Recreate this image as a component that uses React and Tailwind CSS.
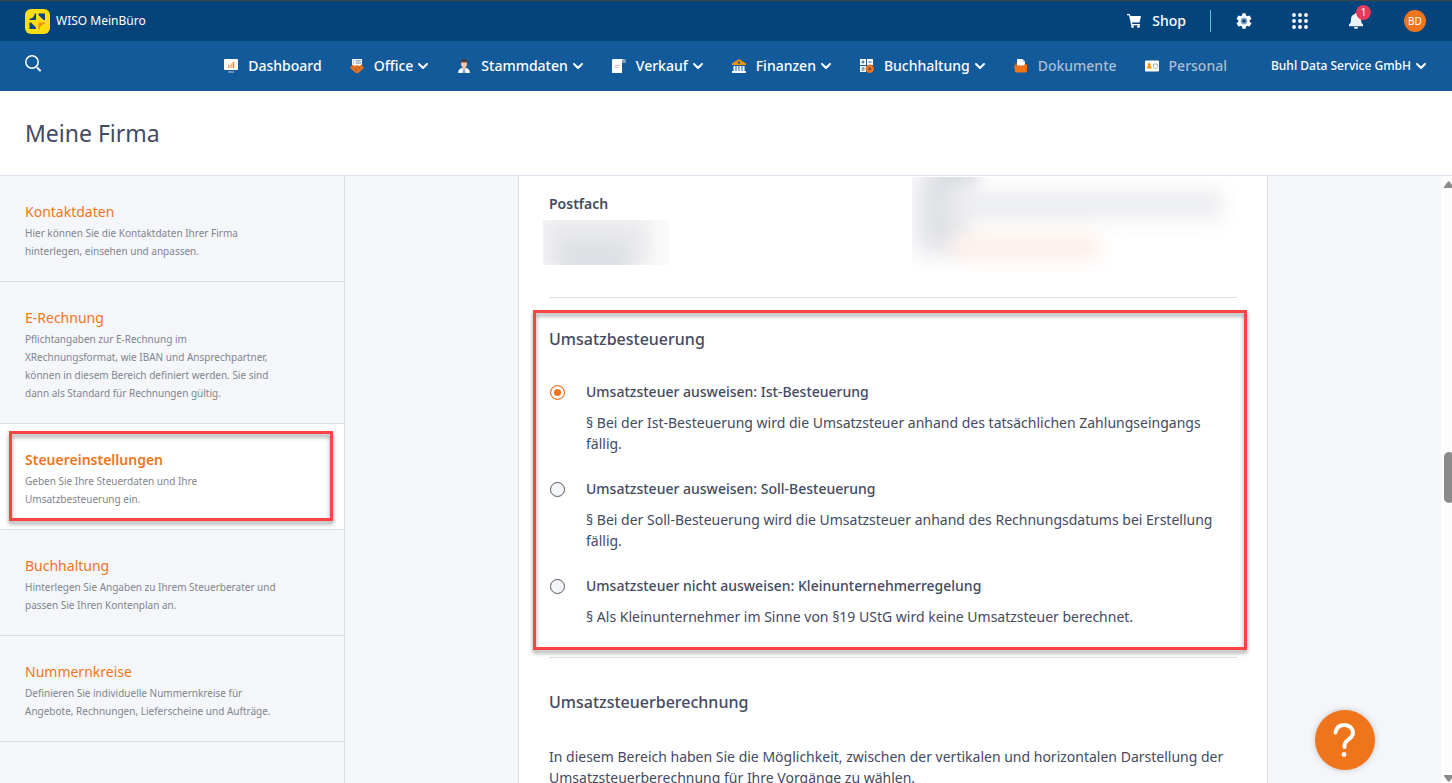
import React, { useState } from "react";

function Chevron() {
  return (
    <svg width="12" height="12" viewBox="0 0 12 12" fill="none" stroke="currentColor" strokeWidth="2" strokeLinecap="round" strokeLinejoin="round">
      <path d="M2 4l4 4 4-4" />
    </svg>
  );
}

function DashboardIcon() {
  return (
    <svg width="14" height="14" viewBox="0 0 14 14">
      <rect x="0" y="0" width="14" height="11" rx="1" fill="#fff" />
      <rect x="4" y="6" width="1.5" height="3" fill="#f59a4a" />
      <rect x="6.3" y="4.5" width="1.5" height="4.5" fill="#f8b27a" />
      <rect x="8.7" y="3" width="1.5" height="6" fill="#ef751c" />
      <rect x="4" y="12" width="6" height="2" rx="0.5" fill="#6d93b4" />
    </svg>
  );
}

function OfficeIcon() {
  return (
    <svg width="14" height="14" viewBox="0 0 14 14">
      <path d="M2 0h10v7H2z" fill="#fff" />
      <path d="M3.2 1.8h1M5.5 1.8H11M3.2 4h1M5.5 4H11" stroke="#5f86ad" strokeWidth="1" />
      <path d="M0 9L2.500 5.500 5 7l2-1 2 1 2.500-1.500L14 9l-2 1.500L8.500 14h-3L2 10.500z" fill="#e5711f" />
      <path d="M4 8.500l3 3M7.500 7.500l3 2.500M5 11l2 1.500" stroke="#8d5a3a" strokeWidth="0.8" fill="none" />
    </svg>
  );
}

function PersonIcon() {
  return (
    <svg width="14" height="14" viewBox="0 0 14 14">
      <path d="M1 14c0-3 2-4.500 4-5h4c2 .5 4 2 4 5z" fill="#fff" />
      <path d="M6 10h2l.5 4h-3z" fill="#7fa6d6" />
      <path d="M5.500 7.500h3V10L7 11l-1.500-1z" fill="#f0b79a" />
      <ellipse cx="7" cy="5" rx="3" ry="3.600" fill="#f7c6aa" />
      <path d="M3.500 5C3 1.500 5 0 7 0s4 1.500 3.500 5L9.800 3.300C8 3.600 6 3.500 4.600 2.900z" fill="#4b3b3b" />
    </svg>
  );
}

function InvoiceIcon() {
  return (
    <svg width="14" height="14" viewBox="0 0 14 14">
      <path d="M10 0h2.500C13.500 0 14 1 14 2v2h-4z" fill="#7d9fb8" />
      <path d="M1.500 0H11c-.7.500-1 1.200-1 2v12H0V1.500C0 .6.600 0 1.500 0z" fill="#fff" />
      <path d="M2.500 6.500H8M2.500 8.500H6" stroke="#f3b5b5" strokeWidth="1" />
    </svg>
  );
}

function BankIcon() {
  return (
    <svg width="14" height="14" viewBox="0 0 14 14">
      <path d="M7 0l7 4.500V6H0V4.500z" fill="#f39200" />
      <circle cx="7" cy="3.500" r="1.200" fill="#135a9b" />
      <path d="M1.500 7h2v5h-2zM4.500 7h2v5h-2zM7.500 7h2v5h-2zM10.500 7h2v5h-2zM0 12h14v2H0z" fill="#fff" />
    </svg>
  );
}

function LedgerIcon() {
  return (
    <svg width="14" height="14" viewBox="0 0 14 14">
      <path d="M0 0h6v6H0zM7 0h6v6H7zM0 7h6v6H0z" fill="#fff" />
      <path d="M1.500 3h3M3 1.500v3M8.500 3h3M1.500 9h3M1.500 11h3" stroke="#135a9b" strokeWidth="1" />
      <circle cx="9.700" cy="9.700" r="4.200" fill="#e97424" />
      <circle cx="9.700" cy="9.700" r="1.500" fill="#7b4f3e" />
    </svg>
  );
}

function FolderIcon() {
  return (
    <svg width="14" height="14" viewBox="0 0 14 14">
      <path d="M3 0h5.500L11 2.500V7H3z" fill="#fff" />
      <path d="M8.500 0v2.500H11z" fill="#b7cbe0" />
      <path d="M.5 4.500H3v2h7l1-1.200h2V13H1.500z" fill="#c95f14" />
      <path d="M0 7h9.500L11 6h2.200l-.8 6.500c0 .6-.4 1-1 1H2c-.5 0-.9-.4-1-1z" fill="#ef751c" />
    </svg>
  );
}

function IdCardIcon() {
  return (
    <svg width="14" height="14" viewBox="0 0 14 14">
      <rect x="0" y="1.500" width="14" height="11" rx="1" fill="#fff" />
      <circle cx="4.200" cy="5.600" r="1.500" fill="#f39200" />
      <path d="M1.700 9.500c0-2 1-2.500 2.500-2.500s2.500.5 2.500 2.500z" fill="#f39200" />
      <path d="M8.500 5h4v2.500c0 1-1 2-2 2s-2-1-2-2z" fill="none" stroke="#8fb0d3" strokeWidth="0.900" />
    </svg>
  );
}

function Logo() {
  return (
    <svg width="25" height="25" viewBox="0 0 25 25">
      <rect width="25" height="25" rx="6" fill="#ffdd0e" />
      <path d="M4.500 11V9.800C7.500 9.500 9.500 7.500 9.800 4.500H11V11z" fill="#0b4581" />
      <path d="M13.500 4.500H20V11h-1.500L13.500 6z" fill="#0b4581" />
      <path d="M4.500 13.500H6l5 5V20H4.500z" fill="#0b4581" />
      <path d="M13.500 13.500H20V15c-3 .3-5 2.200-5.200 5h-1.300z" fill="#f39200" />
    </svg>
  );
}

const navItems = [
  { label: "Dashboard", icon: <DashboardIcon /> },
  { label: "Office", icon: <OfficeIcon />, menu: true },
  { label: "Stammdaten", icon: <PersonIcon />, menu: true },
  { label: "Verkauf", icon: <InvoiceIcon />, menu: true },
  { label: "Finanzen", icon: <BankIcon />, menu: true },
  { label: "Buchhaltung", icon: <LedgerIcon />, menu: true },
  { label: "Dokumente", icon: <FolderIcon />, muted: true },
  { label: "Personal", icon: <IdCardIcon />, muted: true },
];

const sections = [
  { title: "Kontaktdaten", text: "Hier können Sie die Kontaktdaten Ihrer Firma hinterlegen, einsehen und anpassen." },
  {
    title: "E-Rechnung",
    text: "Pflichtangaben zur E-Rechnung im XRechnungsformat, wie IBAN und Ansprechpartner, können in diesem Bereich definiert werden. Sie sind dann als Standard für Rechnungen gültig.",
  },
  { title: "Steuereinstellungen", text: "Geben Sie Ihre Steuerdaten und Ihre Umsatzbesteuerung ein.", active: true },
  { title: "Buchhaltung", text: "Hinterlegen Sie Angaben zu Ihrem Steuerberater und passen Sie Ihren Kontenplan an." },
  { title: "Nummernkreise", text: "Definieren Sie individuelle Nummernkreise für Angebote, Rechnungen, Lieferscheine und Aufträge." },
];

const taxOptions = [
  {
    id: "ist",
    label: "Umsatzsteuer ausweisen: Ist-Besteuerung",
    text: "§ Bei der Ist-Besteuerung wird die Umsatzsteuer anhand des tatsächlichen Zahlungseingangs fällig.",
  },
  {
    id: "soll",
    label: "Umsatzsteuer ausweisen: Soll-Besteuerung",
    text: "§ Bei der Soll-Besteuerung wird die Umsatzsteuer anhand des Rechnungsdatums bei Erstellung fällig.",
  },
  {
    id: "klein",
    label: "Umsatzsteuer nicht ausweisen: Kleinunternehmerregelung",
    text: "§ Als Kleinunternehmer im Sinne von §19 UStG wird keine Umsatzsteuer berechnet.",
  },
];

function TopBar() {
  return (
    <header className="flex h-[41px] shrink-0 items-center justify-between border-t border-[#444444] bg-[#05447a] pr-[26px] pl-[25px] text-white">
      <a href="#" className="flex items-center gap-[6px] text-xs">
        <Logo />
        WISO MeinBüro
      </a>
      <div className="flex items-center">
        <a href="#" className="flex items-center gap-[10px] text-sm font-medium">
          <svg width="15" height="14" viewBox="0 0 15 14" fill="#fff">
            <path d="M0 0h2.800l.6 2H14l-1.500 6.500H5L5.300 10H13v1.200H4.200L2 1.300H0z" />
            <circle cx="5.500" cy="12.500" r="1.400" />
            <circle cx="11.500" cy="12.500" r="1.400" />
          </svg>
          Shop
        </a>
        <span className="ml-6 h-[22px] w-px bg-[#5fc3d0]" />
        <button aria-label="Einstellungen" className="ml-6">
          <svg width="18" height="18" viewBox="0 0 24 24">
            <path fill="#fff" d="M19.500 12.900a7.500 7.500 0 0 0 0-1.800l2.200-1.700a.6.600 0 0 0 .1-.7l-2.200-3.700a.6.600 0 0 0-.7-.2l-2.600 1a8 8 0 0 0-1.700-1l-.4-2.700a.6.600 0 0 0-.6-.5H10.400a.6.600 0 0 0-.6.500l-.4 2.700a8 8 0 0 0-1.700 1l-2.600-1a.6.600 0 0 0-.7.200L2.200 8.700a.6.600 0 0 0 .1.700l2.200 1.700a7.500 7.500 0 0 0 0 1.800l-2.200 1.700a.6.600 0 0 0-.1.700l2.200 3.700c.1.200.4.300.7.200l2.600-1a8 8 0 0 0 1.700 1l.4 2.700c0 .3.300.5.600.5h3.200c.3 0 .6-.2.600-.5l.4-2.700a8 8 0 0 0 1.700-1l2.600 1c.3.100.6 0 .7-.2l2.200-3.700a.6.600 0 0 0-.1-.7z" />
            <circle cx="12" cy="12" r="4.500" fill="#7fa3c4" />
            <circle cx="12" cy="12" r="2.300" fill="#05447a" />
          </svg>
        </button>
        <button aria-label="Apps" className="ml-[39px]">
          <svg width="16" height="16" viewBox="0 0 16 16" fill="#fff">
            {[2, 8, 14].map((y) => [2, 8, 14].map((x) => <circle key={`${x}-${y}`} cx={x} cy={y} r="1.900" />))}
          </svg>
        </button>
        <button aria-label="Benachrichtigungen" className="relative ml-10">
          <svg width="16" height="16" viewBox="0 0 16 16" fill="#eef1f6">
            <path d="M8 0c.7 0 1.100.5 1.100 1.100C11.500 1.600 13 3.500 13 6c0 3.500 1 4.500 2 5.500v1.700H1v-1.700C2 10.500 3 9.500 3 6c0-2.500 1.500-4.400 3.900-4.900C6.900.5 7.300 0 8 0zM6 14h4c0 1.200-.9 2-2 2s-2-.8-2-2z" />
          </svg>
          <span className="absolute -top-2 left-2 flex h-[15px] w-[15px] items-center justify-center rounded-full bg-[#e83a5f] text-[10px]">1</span>
        </button>
        <button className="ml-10 flex h-[22px] w-[22px] items-center justify-center rounded-full bg-[#ef751c] text-[10px]">BD</button>
      </div>
    </header>
  );
}

function NavBar() {
  return (
    <nav className="flex h-[50px] shrink-0 items-center justify-between bg-[#135a9b] px-[25px] text-white">
      <button aria-label="Suche" className="pb-[5px]">
        <svg width="16" height="17" viewBox="0 0 16 17" fill="none" stroke="#fff" strokeWidth="1.500" strokeLinecap="round">
          <circle cx="7" cy="7" r="6.200" />
          <path d="M12.500 13l2.500 2.500" strokeWidth="2" />
        </svg>
      </button>
      <div className="flex items-center">
        <ul className="flex items-center gap-7 text-sm font-medium">
          {navItems.map((item) => (
            <li key={item.label}>
              <a href="#" className={item.muted ? "flex items-center text-[#a9bdd2]" : "flex items-center"}>
                {item.icon}
                <span className="ml-[10px]">{item.label}</span>
                {item.menu && <span className="ml-1"><Chevron /></span>}
              </a>
            </li>
          ))}
        </ul>
        <button className="ml-11 flex items-center gap-1 text-xs font-medium">
          Buhl Data Service GmbH
          <Chevron />
        </button>
      </div>
    </nav>
  );
}

// Red marker frame around whatever it is placed in
function Marker({ className }) {
  return <div className={`pointer-events-none absolute border-[3px] border-[#ff4444] drop-shadow-[0_3px_2px_rgba(0,0,0,0.4)] ${className}`} />;
}

function Sidebar() {
  return (
    <aside className="w-[345px] shrink-0 border-r border-[#dcdfea]">
      {sections.map((s) => (
        <a
          key={s.title}
          href="#"
          className={`relative block border-b border-[#dcdfea] pt-6 pr-16 pb-[21px] pl-[25px] ${s.active ? "bg-white" : ""}`}
        >
          <h2 className={`text-sm leading-6 text-[#ef751c] ${s.active ? "font-semibold" : ""}`}>{s.title}</h2>
          <p className="text-[10px] leading-[18px] text-[#80858f]">{s.text}</p>
          {s.active && <Marker className="top-[7px] right-[11px] bottom-2 left-[9px]" />}
        </a>
      ))}
    </aside>
  );
}

function TaxForm() {
  const [selected, setSelected] = useState("ist");

  return (
    <section className="relative mt-3 -mr-[10px] -ml-4 pt-[17px] pr-[22px] pb-[23px] pl-4">
      <h2 className="text-base leading-6 font-medium">Umsatzbesteuerung</h2>
      <div className="mt-[30px] space-y-6">
        {taxOptions.map((o) => (
          <div key={o.id} className="flex gap-[21px]">
            <input
              type="radio"
              id={o.id}
              name="tax"
              checked={selected === o.id}
              onChange={() => setSelected(o.id)}
              className="mt-1 ml-px h-[15px] w-[15px] shrink-0 appearance-none rounded-full border border-[#55575f] bg-[#f5f6fa] checked:border-[#ef751c] checked:bg-[#ef751c] checked:shadow-[inset_0_0_0_3px_white]"
            />
            <div>
              <label htmlFor={o.id} className="block leading-[21px] font-medium">{o.label}</label>
              <p className="mt-[10px] leading-[21px]">{o.text}</p>
            </div>
          </div>
        ))}
      </div>
      <Marker className="inset-0" />
    </section>
  );
}

function App() {
  return (
    <div className="flex h-screen flex-col overflow-hidden bg-white font-['Noto_Sans',sans-serif] text-[#434a61]">
      <TopBar />
      <NavBar />
      <div className="flex h-[85px] shrink-0 items-center border-b border-[#dcdfea] px-[25px]">
        <h1 className="text-[23px] leading-8">Meine Firma</h1>
      </div>
      <div className="flex min-h-0 flex-1 bg-[#f5f6fa]">
        <Sidebar />
        <main className="min-w-0 flex-1 overflow-hidden">
          <div className="mx-auto max-w-[750px] border-x border-[#dcdfea] bg-white px-[30px] pb-10 text-sm">
            <div className="grid grid-cols-[1fr_325px] pt-px">
              <div className="pt-4">
                <h3 className="leading-[21px] font-semibold">Postfach</h3>
                <div className="relative mt-[6px] -ml-[6px] h-[45px] w-[127px] overflow-hidden bg-[#fbfbfb]">
                  <div className="absolute -top-2 -left-1 h-14 w-[112px] bg-[#ebecee] blur-[10px]" />
                  <div className="absolute top-5 left-4 h-10 w-[72px] bg-[#dddfe4] blur-[10px]" />
                </div>
              </div>
              <div className="relative h-24 overflow-hidden">
                <div className="absolute -top-2 left-1 h-[84px] w-[50px] bg-[#e0e2e7] blur-[12px]" />
                <div className="absolute -top-3 left-6 h-5 w-[42px] bg-[#d8dae0] blur-[8px]" />
                <div className="absolute top-[14px] left-10 h-7 w-[270px] bg-[#ebecef] blur-[10px]" />
                <div className="absolute top-[58px] left-10 h-6 w-[148px] bg-[#fdefe8] blur-[9px]" />
              </div>
            </div>
            <hr className="mt-6 border-[#dcdfea]" />
            <TaxForm />
            <hr className="mt-[7px] border-[#dcdfea]" />
            <h2 className="mt-8 text-base leading-6 font-medium">Umsatzsteuerberechnung</h2>
            <p className="mt-8 leading-[21px]">
              In diesem Bereich haben Sie die Möglichkeit, zwischen der vertikalen und horizontalen Darstellung der Umsatzsteuerberechnung für Ihre Vorgänge zu wählen.
            </p>
          </div>
        </main>
        <div className="relative w-[11px] shrink-0 overflow-hidden bg-[#fcfcfc]">
          <svg className="absolute top-[5px] left-[3px]" width="10" height="7" viewBox="0 0 10 7" fill="#8b8b8b">
            <path d="M4 .5h1.500L9.500 6v1H0V6z" />
          </svg>
          <div className="absolute top-[276px] left-[3px] h-[51px] w-[10px] rounded-full bg-[#8b8b8b]" />
          <svg className="absolute bottom-[1px] left-[3px]" width="10" height="7" viewBox="0 0 10 7" fill="#8b8b8b">
            <path d="M0 0h9.500v1L5.500 6.500H4L0 1z" />
          </svg>
        </div>
      </div>
      <button aria-label="Hilfe" className="fixed right-[77px] bottom-[13px] flex h-[60px] w-[60px] items-center justify-center rounded-full bg-[#ef751c] shadow-[0_0_6px_rgba(0,0,0,0.2)]">
        <svg width="24" height="36" viewBox="0 0 24 36" fill="none" stroke="#fff" strokeWidth="4" strokeLinecap="round" strokeLinejoin="round">
          <path d="M2.500 10.500C3.500 5 7 3 11.500 3c5 0 8.500 3.500 8.500 8 0 6-8.500 6.500-8.500 12.500v1.500" />
          <circle cx="11" cy="32.500" r="2.400" fill="#fff" stroke="none" />
        </svg>
      </button>
    </div>
  );
}

export default App;
